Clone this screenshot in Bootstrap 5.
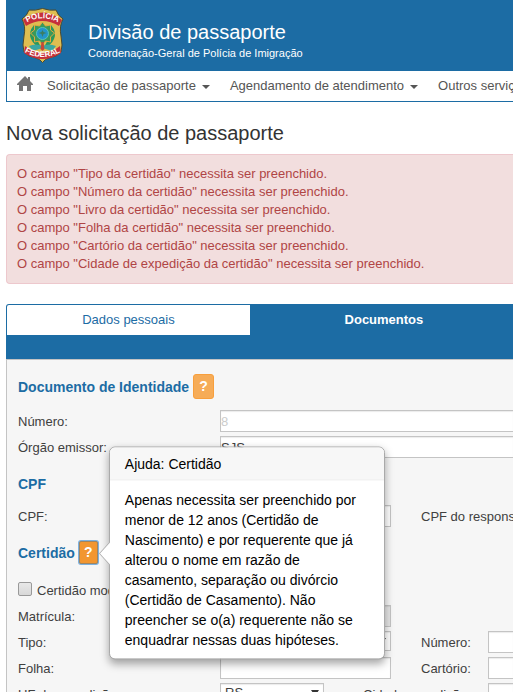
<!DOCTYPE html>
<html lang="pt-BR">
<head>
<meta charset="utf-8">
<meta name="viewport" content="width=device-width, initial-scale=1">
<title>Divisão de passaporte</title>
<link href="https://cdn.jsdelivr.net/npm/bootstrap@5.3.0/dist/css/bootstrap.min.css" rel="stylesheet">
<style>
:root { --pf-blue: #1c6ca4; }
body { font-family: "Liberation Sans", Arial, sans-serif; font-size: 13px; line-height: 18px; color: #404040; background: #fff; }
.page { padding-left: 6px; }
.masthead { background: var(--pf-blue); height: 71px; padding: 8px 0 0 15px; }
.masthead h1 { font-size: 20px; line-height: 24px; margin: 12px 0 0; font-weight: 400; }
.masthead p { font-size: 11px; line-height: 18px; margin: 0; }
.crest { width: 43px; height: 55px; margin-right: 24px; }
.mainnav { height: 31px; padding: 0 0 0 10px; border: solid var(--pf-blue); border-width: 0 0 1px 1px; }
.mainnav .nav-link { padding: 0; color: #555; white-space: nowrap; }
.mainnav .home-link { margin: -4px 14px 0 0; }
.mainnav .dropdown-toggle { margin-right: 20px; }
.mainnav .dropdown-toggle::after { margin-left: 6px; vertical-align: 1px; border-top-width: 4px; border-left-width: 4px; border-right-width: 4px; }
.page-title { font-size: 20px; line-height: 24px; font-weight: 400; color: #333; margin: 19px 0 9px; }
.errors { color: #b04545; background: #f2dede; border: 1px solid #edc8cd; border-right: 0; border-radius: 4px 0 0 4px; padding: 10px; }
.tabs { height: 55px; margin-top: 20px; background: var(--pf-blue); border-radius: 3px 0 0 0; padding: 1px 0 0 1px; }
.tabs .nav-link { padding: 0; height: 30px; line-height: 30px; text-align: center; border-radius: 0; color: var(--pf-blue); }
.tabs .tab-one { width: 48%; background: #fff; border-radius: 2px 0 0 0; }
.tabs .tab-two { color: #fff; font-weight: 700; padding-left: 5px; }
.panel { background: #f6f6f6; border: solid #c4c4c4; border-width: 1px 0 0 1px; padding: 14px 0 20px 11px; }
.section-title { font-size: 14px; line-height: 27px; height: 25px; font-weight: 700; color: var(--pf-blue); margin: 13px 0 9px; }
.section-title.first { margin: 0 0 11px; }
.section-title.last { margin-bottom: 14px; }
.help { width: 21px; height: 25px; margin-left: 4px; padding: 0 0 2px; border: 1px solid #f89f3c; border-radius: 3px; background: #f6ac58; color: #fff; font-size: 14px; line-height: 20px; font-weight: 700; }
.help.active-help { background: #f29630; border: 1px solid #a08560; box-shadow: 0 0 0 1px #7db1e0; width: 19px; height: 23px; margin: 1px; border-radius: 2px; }
.help-wrap { margin-left: 3px; height: 25px; }
.form-line { height: 22px; margin-bottom: 4px; white-space: nowrap; }
.form-line > label { width: 202px; line-height: 24px; flex: none; }
.form-line > .label-right { width: 67px; margin-left: 30px; }
.form-line > .label-wide { width: auto; }
.form-line > .label-city { width: 125px; margin-left: 39px; }
.field { height: 22px; min-width: 0; padding: 0; border: 1px solid #c4c4c4; border-radius: 0; background-color: #fff; box-shadow: inset 0 1px 1px rgba(0,0,0,.08); color: #404040; font-size: 13px; line-height: 18px; }
.field:disabled { background: #e6e6e6; }
.field.half { width: 171px; flex: none; }
.field.to-edge { flex: 1; border-right: 0; }
select.field { height: 20px; appearance: none; padding: 0 4px; background: #fff url("data:image/svg+xml,%3Csvg xmlns='http://www.w3.org/2000/svg' width='8' height='6'%3E%3Cpath d='M0 0h8L4 6z' fill='%23333'/%3E%3C/svg%3E") no-repeat right 4px center; }
select.uf { width: 104px; flex: none; }
.redacted::placeholder { color: #ccc; opacity: 1; }
.old-check { appearance: none; width: 14px; height: 14px; margin: 3px 5px 0 0; border: 1px solid #999; border-radius: 2px; background: linear-gradient(#e8e8e8, #d8d8d8); }
.help-popover { --bs-popover-max-width: 276px; --bs-popover-arrow-width: 22px; --bs-popover-arrow-height: 10px; --bs-popover-arrow-border: #aaa; --bs-popover-border-color: #aaa; --bs-popover-border-radius: 6px; --bs-popover-inner-border-radius: 5px; position: absolute; left: 31px; top: 50%; width: 276px; transform: translateY(-50%); font-family: inherit; font-size: 14px; line-height: 20px; font-weight: 400; white-space: normal; color: #000; box-shadow: 0 4px 8px rgba(0,0,0,.35); }
.help-popover .popover-header { font-size: 14px; line-height: 16px; font-weight: 400; color: #000; padding: 8px 15px; background: #f7f7f7; border-bottom: 1px solid #e4e4e4; }
.help-popover .popover-body { font-size: 14px; line-height: 20px; color: #000; padding: 9px 15px; }
.help-popover .popover-arrow { position: absolute; top: 95px; }
</style>
</head>
<body class="overflow-hidden">
<div class="page vh-100 overflow-hidden">
  <header>
    <div class="masthead d-flex align-items-start text-white">
      <svg class="crest" viewBox="0 0 43 55" role="img" aria-label="Polícia Federal">
        <path d="M8 2Q14 3 21.500 .5Q29 3 35 2Q37 8 42 11Q38 18 40 28Q42 38 40 44Q36 49 28 50Q24 51 21.500 54.500Q19 51 15 50Q7 49 3 44Q1 38 3 28Q5 18 1 11Q6 8 8 2Z" fill="#dfbd51" stroke="#4d4a2d"/>
        <path d="M13 17Q7 24 10 31Q13 38 20 39Q15 32 13 17M30 17Q36 24 33 31Q30 38 23 39Q28 32 30 17" fill="#2a985c"/>
        <path d="M8 38Q15 35 21.500 38Q28 35 35 38L31 43L21.500 40L12 43Z" fill="#3ba7a2"/>
        <path d="m21.500 14 3 4 5-1 0 5 4 3-4 4 0 5-5-1-3 4-3-4-5 1 0-5-4-4 4-3 0-5 5 1Z" fill="#39995b" stroke="#e5a93c"/>
        <path d="m20.500 34h2l1 7-2 2-2-2z" fill="#c44938"/>
        <circle cx="21.500" cy="25.500" r="6" fill="#2495ca" stroke="#59c4bc"/>
        <path d="m21.500 22 1 2 3 1-3 1-1 3-1-3-3-1 3-1z" fill="#3c7d62"/>
        <path d="M2 12Q21.500-3 41 12L38 18Q21.500 8 5 18Z" fill="#c6303b"/>
        <path d="M4 38Q21.500 52 39 38L40 45Q21.500 57 3 45Z" fill="#c6303b"/>
        <path id="arc-top" d="M4 15.500Q21.500 5 39 15.500" fill="none"/>
        <path id="arc-low" d="M2 43Q21.500 55 41 43" fill="none"/>
        <g fill="#fff" font-family="Liberation Sans, Arial, sans-serif" font-size="8" font-weight="700" text-anchor="middle">
          <text><textPath href="#arc-top" startOffset="50%">POLÍCIA</textPath></text>
          <text><textPath href="#arc-low" startOffset="50%">FEDERAL</textPath></text>
        </g>
      </svg>
      <div class="text-nowrap"><h1>Divisão de passaporte</h1><p>Coordenação-Geral de Polícia de Imigração</p></div>
    </div>
    <nav class="mainnav d-flex align-items-center overflow-hidden" aria-label="Principal">
      <a class="nav-link home-link" href="#" aria-label="Início"><svg class="d-block" width="16" height="16" viewBox="0 0 16 16"><path d="M8 0 0 8v1h2v6h4v-5h4v5h4V9h2V8l-3-3V1h-2v2z" fill="#747474"/></svg></a>
      <a class="nav-link dropdown-toggle" href="#">Solicitação de passaporte</a>
      <a class="nav-link dropdown-toggle" href="#">Agendamento de atendimento</a>
      <a class="nav-link dropdown-toggle" href="#">Outros serviços</a>
    </nav>
  </header>
  <main>
    <h2 class="page-title">Nova solicitação de passaporte</h2>
    <div class="errors" role="alert">
      <ul class="list-unstyled mb-0">
        <li>O campo "Tipo da certidão" necessita ser preenchido.</li>
        <li>O campo "Número da certidão" necessita ser preenchido.</li>
        <li>O campo "Livro da certidão" necessita ser preenchido.</li>
        <li>O campo "Folha da certidão" necessita ser preenchido.</li>
        <li>O campo "Cartório da certidão" necessita ser preenchido.</li>
        <li>O campo "Cidade de expedição da certidão" necessita ser preenchido.</li>
      </ul>
    </div>
    <nav class="tabs nav align-items-start" aria-label="Etapas">
      <a class="nav-link tab-one" href="#">Dados pessoais</a>
      <a class="nav-link tab-two flex-fill" href="#" aria-current="page">Documentos</a>
    </nav>
    <form class="panel">
      <h3 class="section-title first d-flex">Documento de Identidade <button type="button" class="help">?</button></h3>
      <div class="form-line d-flex"><label for="num">Número:</label><input id="num" class="field to-edge redacted" type="text" placeholder="8"></div>
      <div class="form-line d-flex"><label for="orgao">Órgão emissor:</label><input id="orgao" class="field to-edge" type="text" value="SJS"></div>

      <h3 class="section-title">CPF</h3>
      <div class="form-line d-flex"><label for="cpf">CPF:</label><input id="cpf" class="field half" type="text"><label class="label-right label-wide" for="cpfresp">CPF do responsável:</label><input id="cpfresp" class="field ms-3" type="text"></div>

      <div class="section-title last d-flex"><h3 class="section-title m-0">Certidão</h3>
        <div class="help-wrap position-relative">
          <button type="button" class="help active-help d-block" aria-describedby="ajuda">?</button>
          <div class="popover help-popover bs-popover-end" role="tooltip" id="ajuda">
            <div class="popover-arrow"></div>
            <h4 class="popover-header">Ajuda: Certidão</h4>
            <div class="popover-body">Apenas necessita ser preenchido por menor de 12 anos (Certidão de Nascimento) e por requerente que já alterou o nome em razão de casamento, separação ou divórcio (Certidão de Casamento). Não preencher se o(a) requerente não se enquadrar nessas duas hipóteses.</div>
          </div>
        </div>
      </div>
      <div class="form-line d-flex"><input id="modelo" class="old-check" type="checkbox"><label for="modelo">Certidão modelo novo</label></div>
      <div class="form-line d-flex"><label for="matricula">Matrícula:</label><input id="matricula" class="field half" type="text" disabled></div>
      <div class="form-line d-flex"><label for="tipo">Tipo:</label><select id="tipo" class="field half"><option></option></select><label class="label-right" for="numcert">Número:</label><input id="numcert" class="field to-edge" type="text"></div>
      <div class="form-line d-flex"><label for="folha">Folha:</label><input id="folha" class="field half" type="text"><label class="label-right" for="cartorio">Cartório:</label><input id="cartorio" class="field to-edge" type="text"></div>
      <div class="form-line d-flex"><label for="uf">UF de expedição:</label><select id="uf" class="field uf"><option>RS</option></select><label class="label-city" for="cidade">Cidade expedição:</label><input id="cidade" class="field to-edge" type="text"></div>
    </form>
  </main>
</div>
<script src="https://cdn.jsdelivr.net/npm/bootstrap@5.3.0/dist/js/bootstrap.bundle.min.js"></script>
</body>
</html>
